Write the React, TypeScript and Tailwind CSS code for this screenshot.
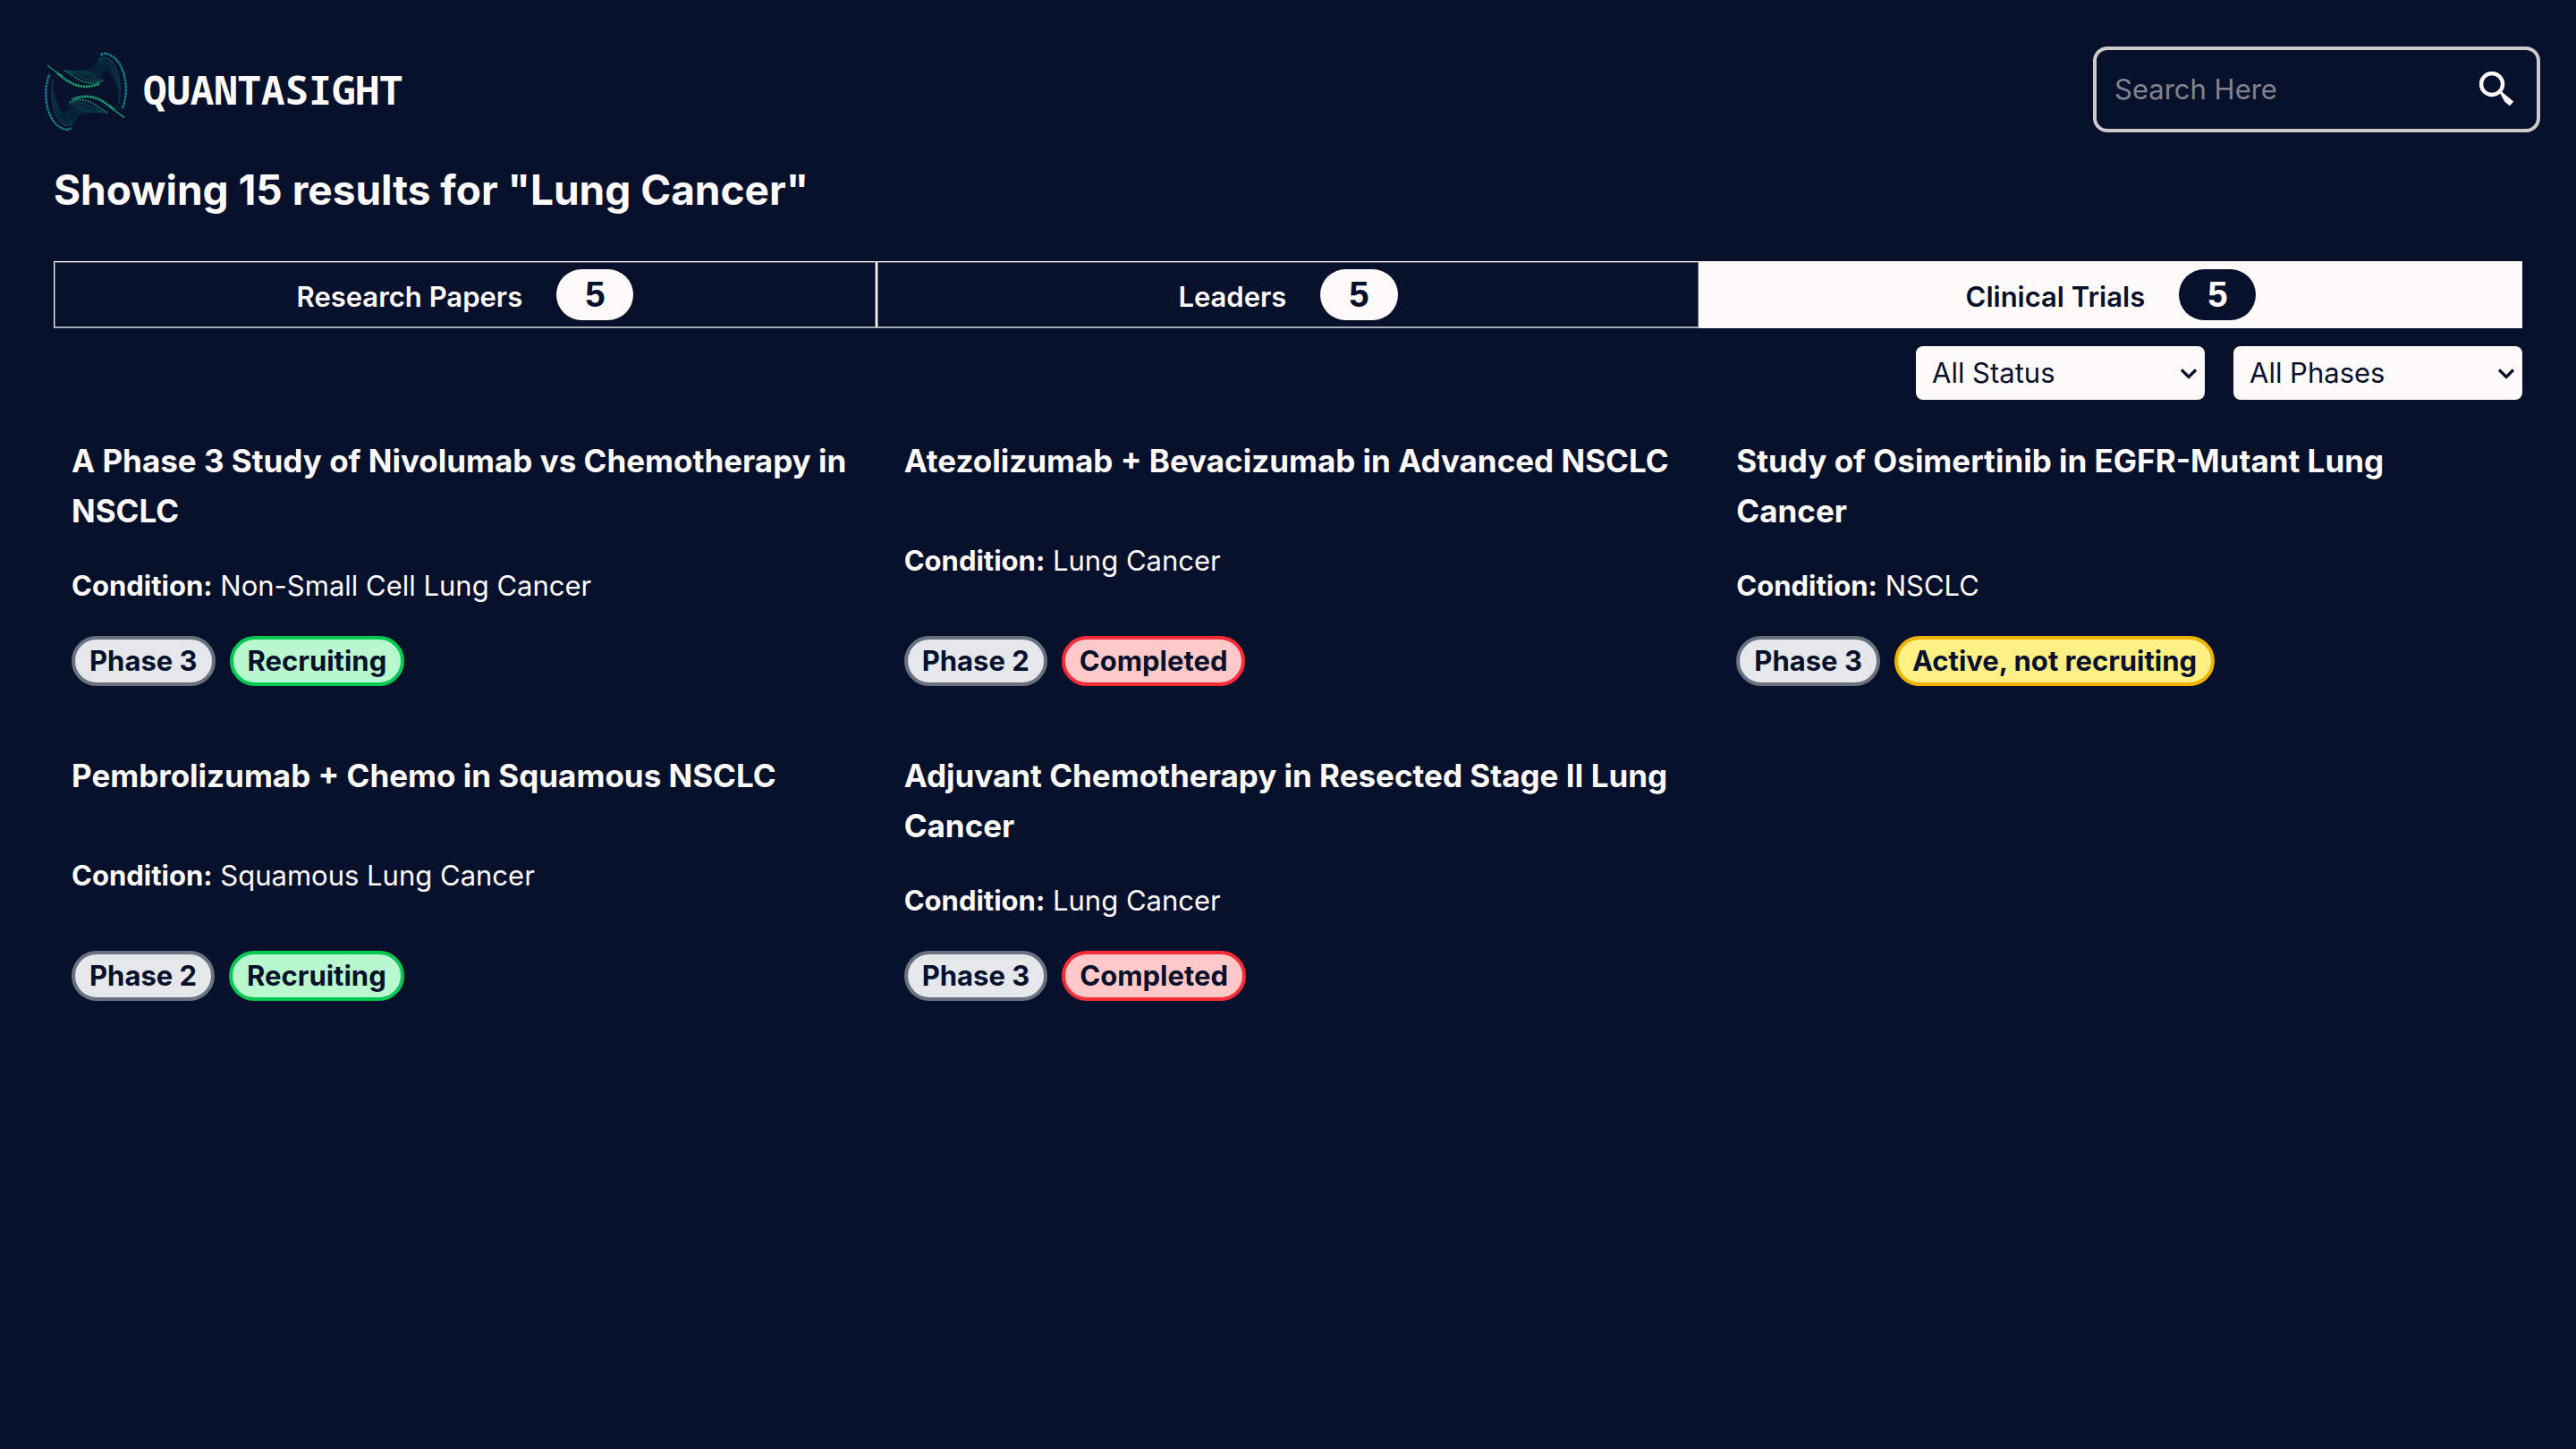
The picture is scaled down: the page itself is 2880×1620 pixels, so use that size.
import React, { useState } from "react";

type Trial = { title: string[]; condition: string; phase: string; status: string };

const trials: Trial[] = [
  { title: ["A Phase 3 Study of Nivolumab vs Chemotherapy in", "NSCLC"], condition: "Non-Small Cell Lung Cancer", phase: "Phase 3", status: "Recruiting" },
  { title: ["Atezolizumab + Bevacizumab in Advanced NSCLC"], condition: "Lung Cancer", phase: "Phase 2", status: "Completed" },
  { title: ["Study of Osimertinib in EGFR-Mutant Lung", "Cancer"], condition: "NSCLC", phase: "Phase 3", status: "Active, not recruiting" },
  { title: ["Pembrolizumab + Chemo in Squamous NSCLC"], condition: "Squamous Lung Cancer", phase: "Phase 2", status: "Recruiting" },
  { title: ["Adjuvant Chemotherapy in Resected Stage II Lung", "Cancer"], condition: "Lung Cancer", phase: "Phase 3", status: "Completed" },
];

const statusStyles: Record<string, string> = {
  Recruiting: "border-green-500 bg-green-200",
  Completed: "border-red-500 bg-red-200",
  "Active, not recruiting": "border-yellow-500 bg-yellow-200",
};

const tabs = [
  { label: "Research Papers", count: 5 },
  { label: "Leaders", count: 5 },
  { label: "Clinical Trials", count: 5 },
];

function LogoHalf() {
  return (
    <g fill="none">
      <path d="M100 86 C130 86 190 92 206 58 C212 44 220 36 236 40 C262 60 276 100 276 140 C262 108 246 86 236 90 C226 96 222 118 206 122 C170 128 130 104 100 86 Z" fill="#0a5a5a" opacity=".15" />
      <path d="M38 69 C60 84 70 94 90 107" stroke="#0f9a6c" strokeWidth="4" />
      <path d="M72 95 C100 118 125 138 160 140 C180 141 198 137 214 130" stroke="#14a574" strokeWidth="8" strokeDasharray="7 2" />
      <path d="M95 86 C120 96 142 124 178 128 C198 130 212 127 226 119" stroke="#108b6b" strokeWidth="6" strokeDasharray="6 3" opacity=".9" />
      <path d="M106 87 C136 92 156 116 188 120 C204 122 216 120 226 115" stroke="#0d7566" strokeWidth="4" strokeDasharray="4 3" opacity=".8" />
      <path d="M118 88 C146 88 166 108 194 113 C208 116 216 114 224 110" stroke="#0b6459" strokeWidth="3" strokeDasharray="4 3" opacity=".8" />
      <path d="M128 88 C156 86 174 102 200 108" stroke="#0b6459" strokeWidth="3" strokeDasharray="3 3" opacity=".7" />
      <path d="M138 88 C162 84 184 96 206 104" stroke="#0b6459" strokeWidth="3" strokeDasharray="3 3" opacity=".6" />
      <path d="M148 92 C178 90 198 78 206 58 C212 44 216 36 222 32" stroke="#0a5f60" strokeWidth="3" opacity=".4" />
      <path d="M160 96 C188 94 200 84 208 66 C214 56 220 50 228 50" stroke="#0a5f60" strokeWidth="3" strokeDasharray="3 2" opacity=".7" />
      <path d="M172 100 C194 98 204 90 212 76 C217 68 224 62 232 62" stroke="#0a5f60" strokeWidth="3" strokeDasharray="3 2" opacity=".7" />
      <path d="M182 104 C200 102 208 96 216 86 C222 78 228 73 236 74" stroke="#0a5f60" strokeWidth="3" strokeDasharray="3 2" opacity=".7" />
      <path d="M190 110 C204 110 212 104 220 96 C226 88 232 84 240 86" stroke="#0a5a5a" strokeWidth="3" strokeDasharray="3 2" opacity=".6" />
      <path d="M218 35 C225 27 238 28 248 34 C272 46 286 66 296 100 C306 140 304 180 290 215" stroke="#0e8294" strokeWidth="7" strokeDasharray="9 2" />
      <path d="M214 50 C224 40 240 42 252 54 C272 74 284 116 282 160 C282 176 280 188 277 198" stroke="#0c6a78" strokeWidth="4" strokeDasharray="6 2" opacity=".75" />
      <path d="M216 60 C226 50 240 54 250 66 C266 88 276 118 276 152" stroke="#0b606c" strokeWidth="4" strokeDasharray="5 2" opacity=".7" />
      <path d="M220 69 C228 61 240 64 250 78 C262 96 270 116 272 138" stroke="#0a5763" strokeWidth="3" strokeDasharray="4 3" opacity=".65" />
      <path d="M224 79 C232 70 242 76 250 88 C258 102 264 112 266 124" stroke="#0a5763" strokeWidth="3" strokeDasharray="4 3" opacity=".5" />
    </g>
  );
}

function Logo() {
  return (
    <svg className="size-[110px] shrink-0" viewBox="0 -15 330 330" aria-hidden="true">
      <LogoHalf />
      <g transform="rotate(180 168 157)">
        <LogoHalf />
      </g>
    </svg>
  );
}

function FilterSelect({ label, options }: { label: string; options: string[] }) {
  return (
    <div className="relative w-[323px]">
      <select
        aria-label={label}
        className="block h-15 w-full appearance-none rounded-lg bg-[#fffafa] pr-12 pl-[18px] text-[31px] text-[#07112b]"
      >
        {options.map((o) => (
          <option key={o}>{o}</option>
        ))}
      </select>
      <svg className="pointer-events-none absolute top-6 right-2 h-3.5 w-5" viewBox="0 0 20 14" fill="none" stroke="#07112b" strokeWidth="3.2" aria-hidden="true">
        <path d="M2 2.5 L10 10.5 L18 2.5" />
      </svg>
    </div>
  );
}

function TrialCard({ trial }: { trial: Trial }) {
  const pill = "rounded-full border-4 px-4 text-[31px] leading-12 font-bold text-[#07112b]";
  return (
    <article className="flex flex-col justify-between gap-7 py-5 pl-5">
      <h2 className="text-[35px] leading-14 font-bold">
        {trial.title.map((line) => (
          <span key={line} className="block">
            {line}
          </span>
        ))}
      </h2>
      <p className="text-[31px] leading-14">
        <strong className="font-bold">Condition:</strong> {trial.condition}
      </p>
      <div className="flex gap-4">
        <span className={`${pill} border-gray-500 bg-gray-200`}>{trial.phase}</span>
        <span className={`${pill} ${statusStyles[trial.status]}`}>{trial.status}</span>
      </div>
    </article>
  );
}

export default function App() {
  const [active, setActive] = useState("Clinical Trials");
  return (
    <div className="min-h-screen bg-[#07112b] font-['Inter',sans-serif] text-[#fffafa]">
      <header className="flex items-center justify-between px-10 pt-[45px]">
        <a href="#" className="flex items-center gap-2.5">
          <Logo />
          <span className="font-['Noto_Sans_Mono','DejaVu_Sans_Mono',monospace] text-[44px] leading-14 font-bold">QUANTASIGHT</span>
        </a>
        <form className="flex h-24 w-[500px] items-center rounded-2xl border-4 border-[#cdc9cd] pr-6 pl-5" onSubmit={(e) => e.preventDefault()}>
          <input
            type="text"
            aria-label="Search"
            placeholder="Search Here"
            className="min-w-0 flex-1 bg-transparent text-[31px] outline-none placeholder:text-[#838390]"
          />
          <button type="submit" aria-label="Submit search" className="shrink-0">
            <svg className="size-10" viewBox="0 0 40 40" fill="none" aria-hidden="true">
              <circle cx="14" cy="14" r="12" stroke="#fffafa" strokeWidth="4.4" />
              <path d="M23.2 24.6 L25 22.6 L38.2 33.6 L34 38.2 L28.5 34 Z" fill="#fffafa" />
            </svg>
          </button>
        </form>
      </header>

      <main className="px-[60px]">
        <h1 className="mt-[29px] text-[46px] leading-14 font-bold">Showing 15 results for "Lung Cancer"</h1>

        <div role="tablist" className="mt-[52px] grid grid-cols-3">
          {tabs.map((tab) => {
            const on = tab.label === active;
            return (
              <button
                key={tab.label}
                role="tab"
                aria-selected={on}
                onClick={() => setActive(tab.label)}
                className={`flex items-baseline justify-center gap-[38px] border border-b-2 pt-2 pb-[7px] text-[31px] font-semibold ${
                  on
                    ? "border-[#fffafa] bg-[#fffafa] text-[#07112b]"
                    : "border-[#fffafa] border-b-[#aaa8b2] shadow-[inset_1px_1px_0_#5c6072,inset_-1px_0_0_#5c6072]"
                }`}
              >
                {tab.label}
                <span
                  className={`rounded-full px-8 font-['Liberation_Sans',Arial,sans-serif] text-[40px] leading-[57px] font-bold ${
                    on ? "bg-[#07112b] text-[#fffafa]" : "bg-[#fffafa] text-[#07112b]"
                  }`}
                >
                  {tab.count}
                </span>
              </button>
            );
          })}
        </div>

        <div className="mt-5 flex justify-end gap-8">
          <FilterSelect label="Status" options={["All Status", "Recruiting", "Completed", "Active, not recruiting"]} />
          <FilterSelect label="Phase" options={["All Phases", "Phase 1", "Phase 2", "Phase 3"]} />
        </div>

        <section className="mt-5 grid grid-cols-3 gap-8">
          {trials.map((t) => (
            <TrialCard key={t.title[0]} trial={t} />
          ))}
        </section>
      </main>
    </div>
  );
}
